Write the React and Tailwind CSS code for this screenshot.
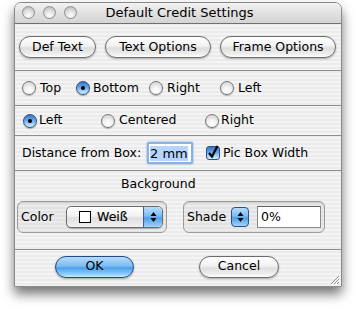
const font = { fontFamily: '"DejaVu Sans", "Liberation Sans", sans-serif' }

function Radio({ on }) {
  return on ? (
    <span className="relative inline-flex w-[14px] h-[14px] shrink-0 rounded-full border border-[#2e4f86] bg-[linear-gradient(#3a74c8,#6aa8ea_45%,#a9dafc_80%,#d4f0ff)] shadow-[0_1px_1px_rgba(0,0,0,0.3)] items-center justify-center">
      <span className="w-[4px] h-[4px] rounded-full bg-black" />
    </span>
  ) : (
    <span className="inline-block w-[14px] h-[14px] shrink-0 rounded-full border border-[#777] bg-[radial-gradient(circle_at_50%_75%,#ffffff,#f2f2f2_40%,#c9c9c9)] shadow-[0_1px_1px_rgba(0,0,0,0.25)]" />
  )
}

function Btn({ w, children, blue }) {
  return (
    <div
      className={
        'h-[22px] rounded-full border flex items-center justify-center text-black ' +
        (blue
          ? 'border-[#23488a] bg-[linear-gradient(#b7dcfb,#7cbcf2_45%,#4d9fe9_55%,#8ccdfc_85%,#c6ecff)] shadow-[0_1px_2px_rgba(0,0,0,0.35)]'
          : 'border-[#6b6b6b] bg-[linear-gradient(#ffffff,#f1f1f1_45%,#dedede_55%,#eeeeee_85%,#ffffff)] shadow-[0_1px_2px_rgba(0,0,0,0.3)]')
      }
      style={{ width: w }}
    >
      {children}
    </div>
  )
}

function Arrows() {
  return (
    <svg width="7" height="12" viewBox="0 0 7 12">
      <path d="M3.5 1 L6.5 5 L0.5 5 Z" fill="#000" />
      <path d="M3.5 11 L6.5 7 L0.5 7 Z" fill="#000" />
    </svg>
  )
}

function Line() {
  return <div className="h-px bg-[#8e8e8e]" />
}

export default function App() {
  return (
    <div className="w-[356px] h-[310px] bg-white pt-[2px] pl-[14px] text-[12.5px] text-black" style={font}>
      <div className="w-[328px] h-[285px] rounded-t-[7px] border border-[#8a8a8a] flex flex-col overflow-hidden shadow-[0_7px_12px_rgba(0,0,0,0.55)] bg-[repeating-linear-gradient(180deg,#ebebeb_0px,#ebebeb_2px,#f4f4f4_2px,#f4f4f4_4px)]">
        {/* title bar */}
        <div className="relative h-[21px] shrink-0 flex items-center justify-center border-b border-[#6f6f6f] bg-[linear-gradient(#f2f2f2,#e0e0e0_50%,#d4d4d4)]">
          <div className="absolute left-[7px] top-[3px] flex gap-[8px]">
            {[0, 1, 2].map(i => (
              <span key={i} className="w-[13px] h-[13px] rounded-full border border-[#8f8f8f] bg-[radial-gradient(circle_at_50%_75%,#ffffff,#e2e2e2_45%,#b0b0b0)]" />
            ))}
          </div>
          <span className="pl-[3px] text-[13px]">Default Credit Settings</span>
        </div>

        {/* top buttons */}
        <div className="h-[46px] shrink-0 flex items-center pl-[4px] gap-[9px]">
          <Btn w={77}>Def Text</Btn>
          <Btn w={106}>Text Options</Btn>
          <Btn w={116}>Frame Options</Btn>
        </div>
        <Line />

        {/* position radios */}
        <div className="h-[34px] shrink-0 flex items-center pl-[7px]">
          <div className="w-[54px] flex items-center gap-[4px]"><Radio />Top</div>
          <div className="w-[73px] flex items-center gap-[3px]"><Radio on />Bottom</div>
          <div className="w-[71px] flex items-center gap-[4px]"><Radio />Right</div>
          <div className="flex items-center gap-[4px]"><Radio />Left</div>
        </div>
        <Line />

        {/* alignment radios */}
        <div className="h-[29px] shrink-0 flex items-center pl-[8px]">
          <div className="w-[78px] flex items-center gap-[2px]"><Radio on />Left</div>
          <div className="w-[104px] flex items-center gap-[4px]"><Radio />Centered</div>
          <div className="flex items-center gap-[2px]"><Radio />Right</div>
        </div>
        <Line />

        {/* distance */}
        <div className="h-[34px] shrink-0 flex items-center pl-[7px]">
          <span className="w-[125px] whitespace-nowrap">Distance from Box:</span>
          <div className="w-[46px] h-[22px] rounded-[2px] border-2 border-[#86b2e6] shadow-[0_0_2px_#5a8fd8] bg-white flex items-center pl-[1px]">
            <span className="bg-[#b5d5ff] leading-[15px] whitespace-nowrap text-[13px]">2 mm</span>
          </div>
          <div className="ml-[13px] flex items-center gap-[3px]">
            <span className="w-[14px] h-[14px] rounded-[3px] border border-[#2e4f86] bg-[linear-gradient(#3a74c8,#6aa8ea_45%,#a9dafc_80%,#d4f0ff)] flex items-center justify-center">
              <svg width="12" height="14" viewBox="0 0 12 14" className="-mt-[3px]">
                <path d="M2 8 L5 11.5 L10.5 1" stroke="#000" strokeWidth="2.2" fill="none" />
              </svg>
            </span>
            Pic Box Width
          </div>
        </div>
        <Line />

        {/* background */}
        <div className="h-[78px] shrink-0 flex flex-col">
          <div className="h-[27px] flex items-center pl-[106px]">Background</div>
          <div className="flex pl-[2px] gap-[16px] mt-[3px]">
            <div className="w-[150px] h-[32px] rounded-[6px] border border-[#9c9c9c] bg-[rgba(0,0,0,0.035)] shadow-[inset_0_1px_1px_rgba(0,0,0,0.12)] flex items-center pl-[3px]">
              <span className="w-[45px]">Color</span>
              <div className="w-[97px] h-[22px] rounded-[5px] border border-[#6b6b6b] bg-[linear-gradient(#ffffff,#f1f1f1_45%,#dedede_55%,#f2f2f2)] flex items-center overflow-hidden shadow-[0_1px_1px_rgba(0,0,0,0.25)]">
                <span className="ml-[12px] w-[12px] h-[12px] border border-black bg-white" />
                <span className="ml-[6px] flex-1 [-webkit-text-stroke:0.15px_#000]">Weiß</span>
                <span className="w-[19px] h-full border-l border-[#3a5f9a] bg-[linear-gradient(#b7dcfb,#7cbcf2_45%,#4d9fe9_55%,#9dd6fd)] flex items-center justify-center">
                  <Arrows />
                </span>
              </div>
            </div>
            <div className="w-[142px] h-[32px] rounded-[6px] border border-[#9c9c9c] bg-[rgba(0,0,0,0.035)] shadow-[inset_0_1px_1px_rgba(0,0,0,0.12)] flex items-center pl-[3px]">
              <span className="w-[44px]">Shade</span>
              <span className="w-[18px] h-[20px] rounded-[4px] border border-[#2e4f86] bg-[linear-gradient(#b7dcfb,#7cbcf2_45%,#4d9fe9_55%,#9dd6fd)] flex items-center justify-center">
                <Arrows />
              </span>
              <div className="ml-[8px] w-[64px] h-[22px] border border-[#8a8a8a] border-t-[#5f5f5f] bg-white flex items-center pl-[3px]">
                0%
              </div>
            </div>
          </div>
        </div>
        <Line />

        {/* ok / cancel */}
        <div className="relative flex-1 flex items-center pl-[40px] gap-[65px] pb-[3px]">
          <Btn w={79} blue>OK</Btn>
          <Btn w={80}>Cancel</Btn>
          <svg className="absolute right-[1px] bottom-[1px]" width="12" height="12" viewBox="0 0 12 12">
            <path d="M11 3 L3 11 M11 6 L6 11 M11 9 L9 11" stroke="#8c8c8c" strokeWidth="1" />
            <path d="M12 4 L4 12 M12 7 L7 12" stroke="#ffffff" strokeWidth="1" />
          </svg>
        </div>
      </div>
    </div>
  )
}
